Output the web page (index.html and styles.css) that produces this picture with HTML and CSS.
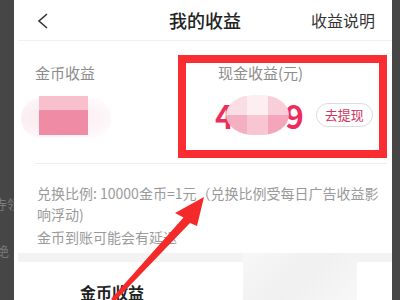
FILE: index.html
```html
<!DOCTYPE html>
<html lang="zh">
<head>
<meta charset="utf-8">
<link rel="stylesheet" href="styles.css">
</head>
<body>
<div class="frame">
  <div class="edge-left">
    <span class="ghost g1">寺领</span>
    <span class="ghost g2">绝</span>
  </div>
  <div class="phone">
    <div class="header">
      <div class="hleft">
        <svg class="back" width="12" height="16" viewBox="0 0 12 16"><path d="M10 1 L2 8 L10 15" fill="none" stroke="#333" stroke-width="1.6"/></svg>
      </div>
      <div class="title">我的收益</div>
      <div class="hright">收益说明</div>
    </div>
    <div class="income">
      <div class="col coin">
        <div class="label">金币收益</div>
        <div class="coin-blur"><span class="halo"></span><span class="blk"></span></div>
      </div>
      <div class="col cash">
        <div class="label">现金收益(元)</div>
        <div class="amount-row">
          <span class="amount">4<span class="mosaic"><i></i><i></i><i></i><i></i><i></i><i></i></span>9</span>
          <span class="withdraw">去提现</span>
        </div>
      </div>
    </div>
    <div class="sep"></div>
    <p class="note">兑换比例: 10000金币=1元（兑换比例受每日广告收益影响浮动)</p>
    <p class="note delay">金币到账可能会有延迟</p>
    <div class="band"></div>
    <div class="bottom">
      <div class="btitle">金币收益</div>
      <div class="card"></div>
    </div>
  </div>
  <div class="edge-right"></div>
</div>
<div class="redbox"></div>
<svg class="arrow" width="400" height="300" viewBox="0 0 400 300">
  <polygon points="204,197 175,213 183.5,217.5 111,299 114.5,301.5 190,223 197,226" fill="#f42a2a"/>
</svg>
</body>
</html>
```
FILE: styles.css
```css
html, body {
  margin: 0;
  padding: 0;
}
body {
  width: 400px;
  height: 300px;
  overflow: hidden;
  background: #464646;
  font-family: "Noto Sans CJK SC", "Noto Sans", sans-serif;
  position: relative;
}
.frame {
  display: flex;
  width: 400px;
  height: 300px;
}
.edge-left {
  width: 14px;
  background: #464646;
  position: relative;
  overflow: hidden;
  flex: none;
}
.ghost {
  position: absolute;
  font-size: 13px;
  color: #7a7a7a;
  white-space: nowrap;
  line-height: 14px;
}
.g1 { top: 197px; left: -6px; }
.g2 { top: 244px; left: -4px; }
.edge-right {
  width: 8px;
  background: #464646;
  flex: none;
}
.phone {
  flex: 1;
  background: #fff;
  display: flex;
  flex-direction: column;
  overflow: hidden;
}
.header {
  height: 40px;
  display: grid;
  grid-template-columns: 1fr auto 1fr;
  align-items: center;
  border-bottom: 1px solid #f1f1f1;
  margin-left: 4px;
  flex: none;
}
.hleft {
  padding-left: 19px;
  display: flex;
  align-items: center;
}
.back { display: block; margin-top: 1px; }
.title {
  font-size: 18px;
  font-weight: 500;
  color: #222;
}
.hright {
  text-align: right;
  padding-right: 17px;
  font-size: 16px;
  color: #333;
}
.income {
  height: 122px;
  display: grid;
  grid-template-columns: 183px 1fr;
  padding-left: 21px;
  flex: none;
}
.label {
  font-size: 15px;
  color: #8c8c8c;
  line-height: 20px;
  margin-top: 22px;
}
.coin-blur {
  position: relative;
  height: 40px;
  margin-top: 13px;
}
.halo {
  position: absolute;
  left: -14px;
  top: 2px;
  width: 90px;
  height: 40px;
  border-radius: 20px;
  background: radial-gradient(ellipse at 35% 50%, #f9e8ee 0%, #fdf4f7 60%, rgba(255,255,255,0) 100%);
}
.blk {
  position: absolute;
  left: 4px;
  top: 0;
  width: 49px;
  height: 39px;
  background: linear-gradient(#f8bfcd 0, #f8bfcd 14px, #f08ba5 14px, #f08ba5 100%);
}
.amount-row {
  display: flex;
  align-items: center;
  margin-top: 12px;
  height: 40px;
}
.amount {
  font-size: 32px;
  font-weight: 700;
  color: #ee2d5c;
  display: flex;
  align-items: center;
  line-height: 40px;
  margin-left: -3px;
}
.mosaic {
  display: grid;
  grid-template-columns: repeat(3, 21px);
  grid-template-rows: 20px 20px;
  width: 63px;
  height: 40px;
  border-radius: 28px / 20px;
  overflow: hidden;
  margin: 0 -4px 0 -8px;
  position: relative;
  z-index: 1;
}
.mosaic i:nth-child(1) { background: #fbdde5; }
.mosaic i:nth-child(2) { background: #fdeef2; }
.mosaic i:nth-child(3) { background: #f8cfd9; }
.mosaic i:nth-child(4) { background: #f4b0c1; }
.mosaic i:nth-child(5) { background: #f8c6d3; }
.mosaic i:nth-child(6) { background: #f3a6b9; }
.withdraw {
  margin-left: 12px;
  height: 22px;
  padding: 0 8px;
  border: 1px solid #dcdcdc;
  border-radius: 12px;
  font-size: 13px;
  line-height: 22px;
  color: #d3365c;
}
.sep {
  height: 1px;
  background: #eeeeee;
  margin: 0 5px 0 21px;
  flex: none;
}
.note {
  margin: 19px 12px 0 23px;
  font-size: 14px;
  line-height: 21px;
  color: #9a9a9a;
}
.note.delay {
  margin-top: 2px;
}
.band {
  height: 9px;
  background: #f3f3f3;
  margin-top: 5px;
  margin-left: 4px;
  flex: none;
}
.bottom {
  flex: 1;
  display: flex;
  position: relative;
}
.btitle {
  margin-left: 66px;
  margin-top: 18px;
  font-size: 16px;
  font-weight: 700;
  color: #222;
  width: 163px;
}
.card {
  width: 114px;
  background: linear-gradient(135deg, #f7f7f7 0%, #f0f0f0 50%, #f8f8f8 100%);
  margin-top: -9px;
}
.redbox {
  position: absolute;
  left: 178px;
  top: 55px;
  width: 209px;
  height: 103px;
  box-sizing: border-box;
  border: 8px solid #fa2d33;
}
.arrow {
  position: absolute;
  left: 0;
  top: 0;
}
```
